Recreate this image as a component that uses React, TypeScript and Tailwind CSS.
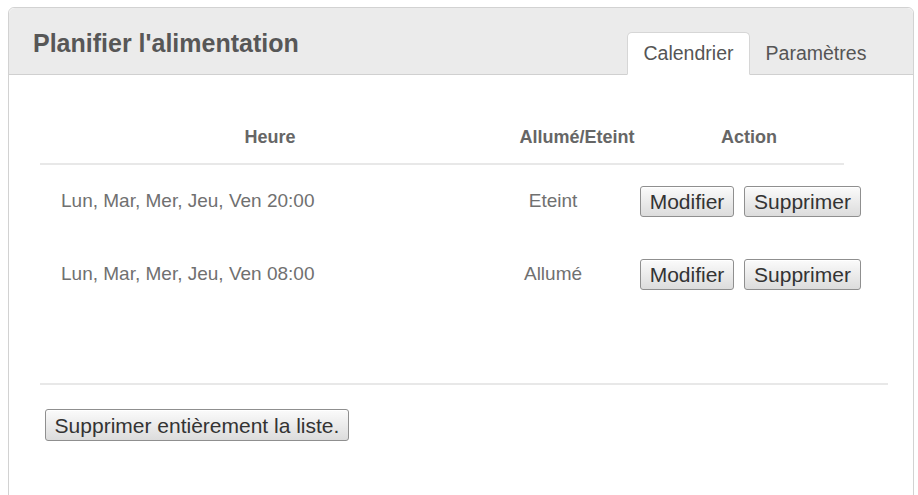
const rows = [
  { time: "Lun, Mar, Mer, Jeu, Ven 20:00", state: "Eteint" },
  { time: "Lun, Mar, Mer, Jeu, Ven 08:00", state: "Allumé" },
];

const btn =
  "h-[31px] px-[6px] rounded-[3px] border border-[#8f8f8f] bg-gradient-to-b from-[#fbfbfb] to-[#dcdcdc] text-[#333] text-[21px] leading-none shadow-[inset_0_1px_0_#fff] whitespace-nowrap";

const App = () => {
  return (
    <div className="w-[918px] h-[495px] bg-white overflow-hidden pt-[7px] pl-[8px] font-['Liberation_Sans',Arial,sans-serif]">
      <div className="w-[906px] h-[500px] border border-[#d2d2d2] rounded-t-[6px] bg-white">
        {/* header */}
        <div className="h-[67px] bg-[#ebebeb] rounded-t-[6px] border-b border-[#d0d0d0] flex items-start justify-between pl-[24px] pr-[35px]">
          <h1 className="mt-[23px] text-[25px] font-bold text-[#575757] leading-none">
            Planifier l'alimentation
          </h1>
          <div className="flex items-end self-end -mb-px gap-[4px]">
            <div className="w-[123px] h-[43px] bg-white border border-[#d6d6d6] border-b-white rounded-t-[5px] flex items-center justify-center text-[19.5px] text-[#555]">
              Calendrier
            </div>
            <div className="w-[124px] h-[43px] flex items-center justify-center text-[19.5px] text-[#555]">
              Paramètres
            </div>
          </div>
        </div>

        {/* table */}
        <div className="pl-[31px]">
          <div className="w-[804px] h-[90px] pt-[49px] grid grid-cols-[460px_154px_190px] border-b-2 border-[#e8e8e8] text-[18px] font-bold text-[#666]">
            <div className="text-center">Heure</div>
            <div className="text-center">Allumé/Eteint</div>
            <div className="text-center">Action</div>
          </div>
          {rows.map((r) => (
            <div key={r.time} className="h-[73px] flex items-center pl-[21px] text-[19px] text-[#707070]">
              <div className="w-[440px]">{r.time}</div>
              <div className="w-[104px] text-center">{r.state}</div>
              <div className="ml-[35px] flex gap-[10px]">
                <button className={`${btn} w-[94px]`}>Modifier</button>
                <button className={`${btn} w-[117px]`}>Supprimer</button>
              </div>
            </div>
          ))}
          <div className="mt-[72px] w-[848px] border-t-2 border-[#e8e8e8]" />
          <div className="pt-[24px] pl-[5px]">
            <button className={`${btn} h-[32px] w-[304px]`}>Supprimer entièrement la liste.</button>
          </div>
        </div>
      </div>
    </div>
  );
};

export default App;
